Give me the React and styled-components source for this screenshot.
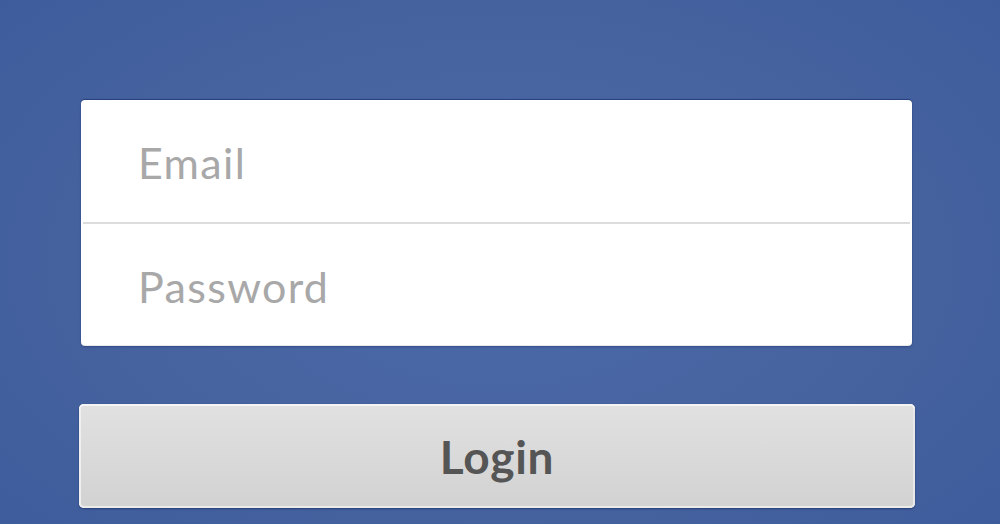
import React from "react";
import styled, { createGlobalStyle } from "styled-components";

const GlobalStyle = createGlobalStyle`
  html, body {
    margin: 0;
    padding: 0;
    height: 100%;
  }
  body {
    font-family: Lato, "Open Sans", sans-serif;
    overflow: hidden;
  }
`;

const Page = styled.div`
  width: 1000px;
  height: 524px;
  box-sizing: border-box;
  padding: 100px 85px 0 79px;
  background: radial-gradient(ellipse 70% 80% at 50% 50%, #4c6aa9 0%, #46639f 55%, #3d5b9b 100%);
  display: flex;
  flex-direction: column;
`;

const Card = styled.div`
  margin: 0 3px 0 2px;
  background: #fff;
  border-radius: 4px;
  box-shadow: 0 -1px 1px rgba(20, 40, 100, 0.6), 0 1px 0 #e9e9e9, 0 2px 2px rgba(20, 40, 100, 0.4);
  display: flex;
  flex-direction: column;
`;

const Field = styled.input`
  height: 122px;
  box-sizing: border-box;
  border: none;
  border-top: ${(p) => (p.$divided ? "2px solid #dcdcdc" : "none")};
  margin: 0 2px;
  padding: 3px 0 0 55px;
  background: transparent;
  font-family: Lato, sans-serif;
  font-size: 43px;
  letter-spacing: 1.35px;
  color: #444;
  outline: none;
  &::placeholder {
    color: #a8a8a8;
  }
  &:last-child {
    height: 123px;
  }
`;

const LoginButton = styled.button`
  margin-top: 59px;
  height: 104px;
  border: none;
  border-radius: 5px;
  background: linear-gradient(#e1e1e1, #d2d2d2);
  box-shadow: inset 0 2px 0 #f4f4f4, inset 2px 0 0 #efefef, inset -2px 0 0 #e8e8e8, inset 0 -2px 0 #ebebe7, 0 1px 2px rgba(20, 40, 100, 0.6);
  font-family: Lato, sans-serif;
  font-weight: 700;
  font-size: 46px;
  letter-spacing: 0.7px;
  color: #555;
  cursor: pointer;
  padding: 0;
`;

export default function App() {
  return (
    <>
      <GlobalStyle />
      <Page>
        <Card>
          <Field type="email" placeholder="Email" />
          <Field type="password" placeholder="Password" $divided />
        </Card>
        <LoginButton>Login</LoginButton>
      </Page>
    </>
  );
}
